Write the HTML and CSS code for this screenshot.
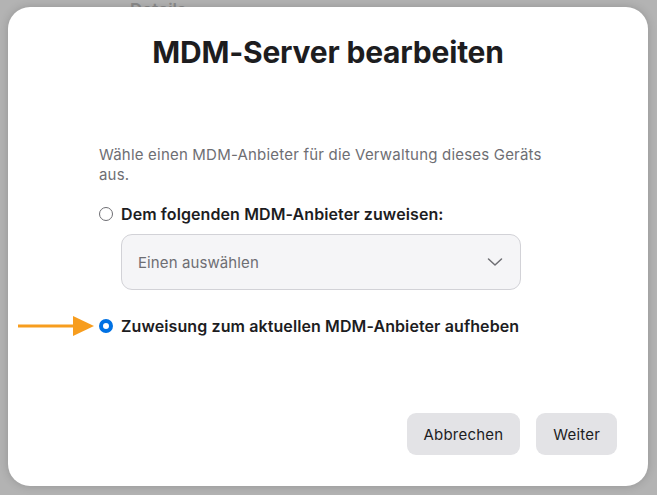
FILE: index.html
```html
<!DOCTYPE html>
<html>
  <head>
    <title>MDM-Server bearbeiten</title>
    <link rel="stylesheet" href="styles.css">
  </head>
  <body>
    <div class="behind">
      <span class="behind-title">Details</span>
    </div>

    <div class="dialog">
      <h1 class="dialog-title">MDM-Server bearbeiten</h1>

      <div class="dialog-body">
        <p class="description">
          Wähle einen MDM-Anbieter für die Verwaltung dieses Geräts aus.
        </p>

        <label class="radio-row">
          <span class="radio"></span>
          Dem folgenden MDM-Anbieter zuweisen:
        </label>

        <div class="select">
          <span class="select-text">Einen auswählen</span>
          <svg class="chevron" width="16" height="10" viewBox="0 0 16 10">
            <path d="M1.5 2 L8 8 L14.5 2" fill="none" stroke="#6e6e73" stroke-width="1.5" stroke-linecap="round" stroke-linejoin="round" />
          </svg>
        </div>

        <label class="radio-row radio-row-last">
          <svg class="arrow" width="76" height="22" viewBox="0 0 76 22">
            <line x1="0" y1="11" x2="58" y2="11" stroke="#f79d1e" stroke-width="3" />
            <polygon points="55,1 76,11 55,21" fill="#f79d1e" />
          </svg>
          <span class="radio radio-checked"></span>
          Zuweisung zum aktuellen MDM-Anbieter aufheben
        </label>
      </div>

      <div class="dialog-footer">
        <button class="button">Abbrechen</button>
        <button class="button">Weiter</button>
      </div>
    </div>
  </body>
</html>
```

FILE: styles.css
```css
body {
  margin: 0;
  height: 495px;
  background-color: #b3b3b3;
  font-family: Inter, "Noto Sans", sans-serif;
  color: #1d1d1f;
  overflow: hidden;
}

.behind {
  height: 7px;
  overflow: hidden;
  padding-left: 130px;
}

.behind-title {
  display: block;
  font-size: 17px;
  font-weight: 600;
  line-height: 17px;
  margin-top: 2px;
  color: #8c8c8c;
}

.dialog {
  position: relative;
  margin: 0 9px 0 8px;
  height: 479px;
  box-sizing: border-box;
  background-color: #fff;
  border-radius: 22px;
  box-shadow: 0 0 10px rgba(0, 0, 0, 0.18);
  display: flex;
  flex-direction: column;
  padding: 0 31px 31px 91px;
}

.dialog-title {
  margin: 27px -31px 0 -91px;
  font-size: 30px;
  line-height: 36px;
  font-weight: 700;
  text-align: center;
  letter-spacing: -0.2px;
  color: #1d1d1f;
}

.dialog-body {
  margin-top: 75px;
  width: 460px;
}

.description {
  margin: 0;
  font-size: 15px;
  line-height: 20px;
  letter-spacing: 0.2px;
  color: #6e6e73;
}

.radio-row {
  position: relative;
  display: flex;
  align-items: center;
  gap: 8px;
  margin-top: 19px;
  font-size: 16px;
  line-height: 20px;
  font-weight: 600;
  letter-spacing: 0.1px;
  color: #1d1d1f;
}

.radio-row-last {
  margin-top: 26px;
}

.radio {
  width: 14px;
  height: 14px;
  box-sizing: border-box;
  border: 1px solid #6e6e73;
  border-radius: 50%;
  flex-shrink: 0;
}

.radio-checked {
  border: 4.5px solid #0071e3;
  background-color: #fff;
}

.arrow {
  position: absolute;
  left: -81px;
  top: -1px;
}

.select {
  margin: 10px 0 0 22px;
  width: 400px;
  height: 56px;
  box-sizing: border-box;
  border: 1px solid #d2d2d7;
  border-radius: 11px;
  background-color: #f5f5f7;
  display: flex;
  align-items: center;
  justify-content: space-between;
  padding: 0 17px 0 16px;
}

.select-text {
  font-size: 15px;
  letter-spacing: 0.1px;
  color: #6e6e73;
}

.dialog-footer {
  margin-top: auto;
  display: flex;
  justify-content: flex-end;
  gap: 16px;
}

.button {
  height: 42px;
  padding: 0 17px;
  border: none;
  border-radius: 9px;
  background-color: #e3e3e6;
  color: #1d1d1f;
  font-family: Inter, "Noto Sans", sans-serif;
  font-size: 15px;
  letter-spacing: 0.2px;
  cursor: pointer;
}
```
